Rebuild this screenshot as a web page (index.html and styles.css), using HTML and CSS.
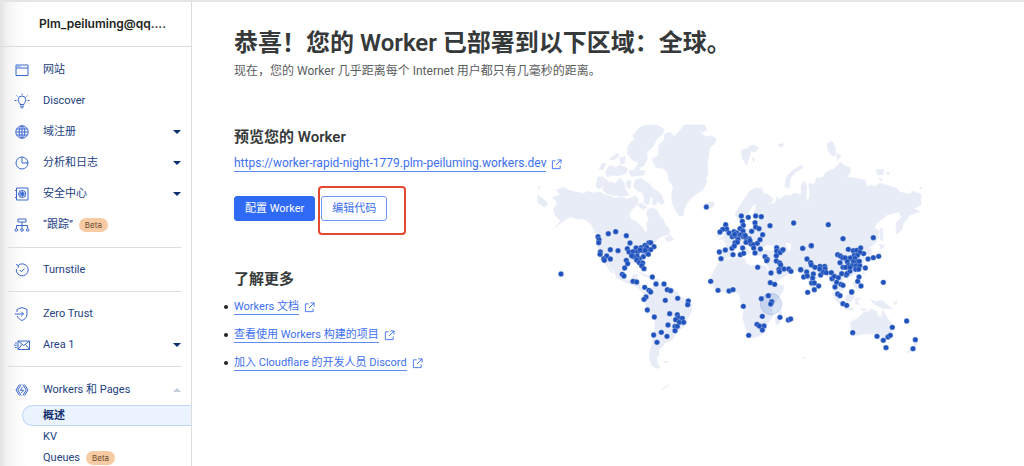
FILE: index.html
```html
<!DOCTYPE html>
<html lang="zh-CN">
<head>
<meta charset="utf-8">
<meta name="viewport" content="width=device-width, initial-scale=1">
<title>Workers</title>
<link rel="stylesheet" href="styles.css">
</head>
<body>
<svg width="0" height="0" class="defs" aria-hidden="true">
  <symbol id="external" viewBox="0 0 12 12"><path d="M5 2H1.5v8.5H10V7M7 1h4v4M11 1 5.5 6.500"/></symbol>
</svg>
<div class="app">
  <aside class="sidebar">
    <div class="account">Plm_peiluming@qq....</div>
    <nav class="nav">
      <div class="group">
        <a class="item" href="#"><svg class="icon" viewBox="0 0 16 16"><path d="M2 3h12v10.500H2zM2 6h12M3.500 4.500h1M5.500 4.500h1"/></svg>网站</a>
        <a class="item" href="#"><svg class="icon" viewBox="0 0 16 16"><path d="M6 11.500C6 9.500 4.200 9 4.200 6.800a3.800 3.800 0 0 1 7.600 0c0 2.200-1.800 2.700-1.800 4.700zM6 13.200h4M6.700 14.800h2.600M8 .5v1.300M.5 7.500h2M13.500 7.500h2M2.500 2.500l1 1M13.500 2.500l-1 1"/></svg>Discover</a>
        <a class="item" href="#"><svg class="icon" viewBox="0 0 16 16"><circle cx="8" cy="8" r="6.200"/><ellipse cx="8" cy="8" rx="2.800" ry="6.200"/><path d="M2.500 5h11M2 8h12M2.500 11h11M8 2v12"/></svg>域注册<span class="caret"></span></a>
        <a class="item" href="#"><svg class="icon" viewBox="0 0 16 16"><circle cx="8" cy="8" r="6"/><path d="M8 2v6h6"/></svg>分析和日志<span class="caret"></span></a>
        <a class="item" href="#"><svg class="icon" viewBox="0 0 16 16"><path d="M2.500 2h11.500v12H2.500zM1 4.500h1.500M1 11.500h1.500"/><circle cx="8.200" cy="8" r="3.600"/><circle cx="8.200" cy="8" r="1.300"/><path d="M8.200 4.400v7.200M4.600 8h7.200M5.700 5.500l5 5M10.700 5.500l-5 5"/></svg>安全中心<span class="caret"></span></a>
        <a class="item" href="#"><svg class="icon" viewBox="0 0 16 16"><path d="M4 2h8v3H4zM8 5v6.500M2.500 11.500v-3h11v3"/><circle cx="2.300" cy="13" r="1.300"/><circle cx="8" cy="13" r="1.300"/><circle cx="13.700" cy="13" r="1.300"/></svg>“跟踪”<span class="badge">Beta</span></a>
      </div>
      <div class="group">
        <a class="item" href="#"><svg class="icon" viewBox="0 0 16 16"><path d="M4 3.600A6 6 0 1 1 2.300 7M2 2.500l2.300 1v2.400M5.700 8l1.700 1.800 3.200-3.300"/></svg>Turnstile</a>
      </div>
      <div class="group">
        <a class="item" href="#"><svg class="icon" viewBox="0 0 16 16"><path d="M3 6V3.500L8 1.500l5 2V8c0 3.500-2.500 5.500-5 6.500-2-.8-4-2.300-4.700-4.500M.8 8h8.700M7.200 5.700 9.500 8l-2.300 2.300"/></svg>Zero Trust</a>
        <a class="item" href="#"><svg class="icon" viewBox="0 0 16 16"><path d="M4 4h11.500v8.500H4zM4 4l5.700 4.500L15.500 4M4 12.500l4-5M15.500 12.500l-4-5M1 6h1.800M0 8.200h2.800M1 10.500h1.800"/></svg>Area 1<span class="caret"></span></a>
      </div>
      <div class="group">
        <a class="item" href="#"><svg class="icon" viewBox="0 0 16 16"><path d="M5.500 2.500 2 8l3.500 5.500M10.500 2.500 14 8l-3.500 5.500M7.200 2.500 3.800 8l3.400 5.500M8.800 2.500 12.200 8l-3.400 5.500M8.700 5 6.200 8.300h3.500L7.300 11"/></svg>Workers 和 Pages<span class="caret up"></span></a>
        <a class="sub active" href="#">概述</a>
        <a class="sub" href="#">KV</a>
        <a class="sub" href="#">Queues<span class="badge">Beta</span></a>
      </div>
    </nav>
  </aside>
  <main class="main">
    <header>
      <h1>恭喜！您的 Worker 已部署到以下区域：全球。</h1>
      <p class="lead">现在，您的 Worker 几乎距离每个 Internet 用户都只有几毫秒的距离。</p>
    </header>
    <div class="columns">
      <div class="content">
        <section>
          <h2>预览您的 Worker</h2>
          <a class="link url" href="#"><span>https://worker-rapid-night-1779.plm-peiluming.workers.dev</span><svg class="ext"><use href="#external"/></svg></a>
          <div class="actions">
            <button class="btn primary" type="button">配置 Worker</button>
            <div class="highlight"><button class="btn" type="button">编辑代码</button></div>
          </div>
        </section>
        <section class="more">
          <h2>了解更多</h2>
          <ul>
            <li><a class="link" href="#"><span>Workers 文档</span><svg class="ext"><use href="#external"/></svg></a></li>
            <li><a class="link" href="#"><span>查看使用 Workers 构建的项目</span><svg class="ext"><use href="#external"/></svg></a></li>
            <li><a class="link" href="#"><span>加入 Cloudflare 的开发人员 Discord</span><svg class="ext"><use href="#external"/></svg></a></li>
          </ul>
        </section>
      </div>
      <svg class="map" viewBox="0 0 1200 840" role="img" aria-label="World map">
        <defs>
          <marker id="dot" viewBox="-10 -10 20 20" markerWidth="20" markerHeight="20" markerUnits="userSpaceOnUse"><circle class="pin" r="8"/></marker>
        </defs>
        <g class="land">
          <path d="M80 225 100 217 112 224 130 229 160 236 175 229 190 234 210 231 225 240 240 243 255 250 275 246 290 252 306 248 318 243 326 254 320 270 303 286 297 300 302 312 320 320 336 336 345 352 353 348 350 328 357 312 350 298 353 284 368 278 383 288 388 304 399 312 406 328 420 345 417 358 396 364 382 372 372 386 360 410 345 428 335 440 343 460 336 463 325 445 300 442 285 455 280 480 290 498 303 494 310 480 322 478 318 498 326 505 332 520 345 530 362 538 356 545 340 534 320 515 290 503 262 490 252 470 236 446 230 444 250 472 246 474 222 440 209 420 203 395 204 368 194 348 182 326 162 312 140 312 122 305 100 318 75 337 92 318 75 300 70 284 82 262 68 247 90 240Z"/>
          <path d="M358 530 372 512 385 505 405 510 430 520 445 534 452 545 474 558 487 568 484 590 473 610 467 630 448 646 436 660 425 676 405 683 398 695 385 706 388 718 380 726 382 745 390 758 378 760 365 750 358 730 360 708 366 690 370 660 375 635 374 612 360 595 348 572 342 556 350 540Z"/>
          <path d="M450 48 462 30 524 30 531 44 510 55 530 66 545 62 559 72 552 88 540 96 536 120 532 150 534 180 528 190 530 202 518 225 494 240 472 262 462 284 460 302 450 303 438 288 427 264 425 238 430 215 418 198 412 172 400 160 378 158 366 132 385 122 386 92 404 72 404 58 420 52 432 64Z"/>
          <path d="M308 62 328 38 345 31 382 31 402 42 398 58 380 72 368 96 350 112 352 132 340 154 327 157 322 140 308 136 292 116 294 94 306 78 316 76Z"/>
          <path d="M207 162 216 146 228 144 220 164ZM238 132 252 122 262 114 268 122 252 134ZM226 172 238 152 258 158 270 150 292 160 290 174 266 182 246 180 232 186ZM198 214 204 186 218 186 236 200 224 212 206 222ZM218 224 228 206 246 200 256 206 270 190 282 202 286 222 296 240 272 244 248 240 230 236ZM296 168 312 166 322 150 332 168 346 168 340 180 304 184ZM310 214 318 194 334 190 346 200 360 208 368 222 380 226 394 240 403 264 392 268 382 256 378 270 366 268 370 250 352 240 346 254 336 232 322 226ZM268 130 286 124 284 144 272 146ZM290 196 304 198 300 222 290 214ZM322 268 334 264 350 276 338 284ZM345 236 362 242 356 270 342 264ZM405 370 420 360 431 374 412 380ZM23 240 40 252 54 266 44 276 24 264ZM528 264 550 260 554 272 536 282ZM325 470 350 480 366 489 345 484ZM370 492 388 494 386 500 370 498ZM400 740 414 739 410 744ZM393 824 416 810 412 815ZM24 215 32 217 28 221Z"/>
          <g transform="translate(570 0)">
            <path fill-rule="evenodd" d="M45 300 58 274 74 252 88 230 104 220 124 220 130 234 150 242 160 254 152 264 142 258 148 268 166 264 170 246 178 254 196 240 210 244 222 234 244 240 243 212 254 198 260 214 258 246 264 262 270 240 266 206 284 208 288 190 306 188 320 170 342 162 360 142 374 152 390 158 392 172 380 186 408 190 436 196 440 216 454 210 462 216 480 204 506 212 530 220 540 232 575 238 575 228 603 238 603 270 582 280 600 290 570 300 550 325 545 345 530 357 528 325 545 305 535 290 500 300 490 310 470 325 462 340 478 347 474 372 462 388 448 396 456 414 446 424 432 402 426 412 434 430 427 454 415 472 392 484 372 488 365 500 376 514 370 526 356 526 350 518 362 540 356 545 342 530 334 500 325 485 312 470 300 480 285 500 286 522 276 524 260 490 250 485 240 470 215 462 206 475 190 487 165 502 156 490 146 460 136 438 130 422 106 420 100 404 86 393 74 384 68 388 90 412 84 416 64 396 46 394 30 426 10 432-5 430-8 404 20 400 20 386 10 378 30 370 50 355 58 345 60 325 70 330 75 345 96 338 108 315 122 310 98 302 105 285 110 265 95 275 80 300 76 320 66 318 54 310ZM120 402 142 388 160 392 178 404 150 408ZM196 380 214 386 212 412 202 402Z"/>
            <path d="M5 437 25 433 60 428 75 432 75 444 95 454 115 448 138 454 150 488 162 510 192 511 188 530 170 556 155 576 158 604 142 628 136 648 120 662 98 669 85 665 78 640 68 610 72 582 62 562 60 540 46 530 22 529 0 532-15 520-28 500-24 480-14 460-4 445Z"/>
            <path d="M-3 372 12 366 10 342 16 326 26 332 24 350 34 362 24 374ZM-8 348 4 346 4 362-8 364ZM166 612 182 586 186 602 176 630 168 626ZM391 622 418 607 430 592 446 590 452 582 468 588 476 604 486 606 488 584 498 604 514 624 520 642 510 664 492 678 472 672 460 656 432 656 398 664 394 646ZM488 692 502 692 496 706ZM580 668 595 680 586 694 575 708 560 714 574 698 584 690ZM194 214 200 184 220 164 246 150 248 158 226 172 210 192 208 220ZM64 106 88 98 92 112 80 150 66 128ZM84 96 100 90 116 98 106 112 92 108ZM96 130 104 130 102 142ZM174 88 192 86 182 98ZM322 86 336 78 346 98 346 122 336 122 324 108ZM350 114 364 122 352 136ZM468 164 490 164 490 178 472 180ZM496 172 510 174 504 180ZM478 190 488 194 480 198ZM600 216h4v5h-4ZM482 340 488 342 488 378 482 374ZM478 388 494 392 484 404ZM480 408 484 422 468 430 448 434 450 428 470 422ZM335 532 350 540 368 562 374 576 364 574 348 556ZM378 544 398 530 402 546 392 562 378 558ZM374 578 398 580 400 585 376 583ZM406 552 424 548 410 556 418 570 406 566ZM400 500 408 506 418 528 402 514ZM420 580 440 583 432 587ZM450 554 468 560 486 556 510 576 518 582 490 580 466 570ZM520 564 532 558 528 568ZM278 524 286 530 280 534ZM248 726 254 728 250 732ZM430 468 434 474 430 480Z"/>
          </g>
        </g>
        <circle class="halo" cx="723" cy="567" r="32"/>
        <g class="pins">
          <polyline points="204,365 207,374 206,383 235,356 257,350 289,362 300,384 211,411 210,418 241,404 264,407 292,401 297,411 309,410 318,399 323,410 333,398 345,391 338,407 350,411 357,383 362,383 372,395 362,404 355,418 340,425 328,432 321,423 311,425 320,435 328,443 338,444 335,452 342,461 289,436 293,446 284,459 230,423 221,431 223,436 241,432 277,478 282,483 309,499 320,501 367,486 378,507 402,507 344,517 357,526 362,531 412,524 422,527 348,546 342,553 406,556 443,550 475,558 473,569 352,585 373,606 419,596 442,599 445,608 457,610 437,614 448,622 461,622 435,634 442,634 435,647 414,630 394,652 371,660 411,664 381,682 93,477 529,276 350,397 330,405 345,406 305,422"/>
          <g transform="translate(540 270)">
            <polyline points="94,33 115,37 137,33 154,35 97,49 100,61 135,53 137,66 147,71 125,79 158,89 180,62 251,54 47,59 50,72 38,73 30,81 57,84 72,80 67,95 80,84 76,93 90,71 99,78 91,90 100,95 84,103 75,113 82,112 103,90 109,100 118,102 114,111 123,117 66,130 73,123 46,135 28,141 33,161 69,149 91,149 101,145 98,129 130,119 131,129 135,144 151,132 142,115 150,104 200,128 200,138 215,137 210,143 199,152 165,155 172,163 170,167 143,187 199,168 209,174 212,180 207,193 208,200 222,192 236,192 243,199 183,204 181,233 194,238 278,130 304,122 272,194 24,256 57,258 69,254 2,229 108,112 120,107 106,92 74,88 219,134"/>
          </g>
          <g transform="translate(570 390)">
            <polyline points="145,152 124,161 155,170 152,177 70,184 127,214 111,238 118,243 132,243 127,255 86,271 180,217 205,225 212,222 398,263 471,274 490,286 504,276 511,271 517,247 560,228 586,284 579,311 498,308 490,112 369,176 380,181 353,147 360,152 395,141"/>
          </g>
          <g transform="translate(810 330)">
            <polyline points="129,41 220,38 85,-1 8,70 34,62 21,102 32,113 34,120 45,127 60,124 59,132 74,124 75,131 2,134 20,141 11,156 22,153 40,147 38,159 35,174 43,174 56,183 43,194 23,202 62,150 70,141 79,143 94,143 96,161 103,154 115,158 110,172 105,186 123,178 129,181 125,146 139,150 142,145 150,138 120,113 113,89 121,93 128,98 136,99 145,73 160,77 170,76 182,69 191,86 180,82 151,99 163,91 172,91 165,100 142,110 146,121 129,127 160,110 172,110 156,122 169,122 179,122 178,109 167,133 176,133 196,129 177,156 173,169 183,183 204,102 220,98 236,94 155,201 137,127 150,127"/>
          </g>
        </g>
      </svg>
    </div>
  </main>
</div>
</body>
</html>
```
FILE: styles.css
```css
* {
  box-sizing: border-box;
}

body {
  margin: 0;
  background: #fff;
  color: #36393a;
  font-family: Roboto, "Noto Sans CJK SC", sans-serif;
  font-size: 11px;
  line-height: 16px;
}

h1, h2, p, ul {
  margin: 0;
}

.defs {
  position: absolute;
}

.app {
  display: flex;
  height: 100vh;
  border-top: 2px solid #e5e5e5;
}

.sidebar {
  flex: none;
  width: 192px;
  overflow: hidden;
  border-right: 1px solid #dedede;
  background: linear-gradient(to right, #e2e2e2, #f4f4f4 8px, #fdfdfd 20px, #fff 32px);
}

.account {
  height: 45px;
  padding: 14px 24px 0 39px;
  border-bottom: 1px solid #dcdcdc;
  color: #1d1f20;
  font-family: Inter, sans-serif;
  font-size: 12px;
  font-weight: 600;
}

.group {
  margin: 0 10px 0 8px;
  padding: 6px 0;
  border-bottom: 1px solid #dedede;
}

.group:first-child {
  padding: 7px 0;
}

.group:last-child {
  margin-right: 0;
  padding-top: 7px;
  border-bottom: 0;
}

.item {
  display: flex;
  align-items: center;
  height: 31px;
  padding-left: 6px;
  color: #23417f;
  text-decoration: none;
}

.icon {
  flex: none;
  width: 16px;
  height: 16px;
  margin-right: 13px;
  fill: none;
  stroke: #3a68cf;
  stroke-width: 1;
}

.caret {
  margin-left: auto;
  border: 4px solid transparent;
  border-top-color: #0b2e72;
  border-bottom: 0;
}

.caret.up {
  margin-right: 10px;
  border-top: 0;
  border-bottom: 4px solid #c4cbdb;
}

.badge {
  margin-left: 6px;
  padding: 0 6px;
  border-radius: 7px;
  background: #f6cba4;
  color: #6a4a2c;
  font-family: Inter, sans-serif;
  font-size: 8px;
  font-weight: 400;
  line-height: 14px;
}

.sub {
  display: flex;
  align-items: center;
  height: 21px;
  margin-left: 14px;
  padding-left: 21px;
  color: #23417f;
  text-decoration: none;
}

.sub.active {
  border: 1px solid #bfd6f8;
  border-right: 0;
  border-radius: 11px 0 0 11px;
  background: #ebf3fe;
  padding-left: 20px;
  color: #102f6e;
  font-weight: 700;
}

.main {
  flex: 1;
  min-width: 0;
  padding: 25px 94px 0 42px;
}

h1 {
  font-size: 24px;
  font-weight: 600;
  line-height: 32px;
  white-space: nowrap;
}

.lead {
  margin-top: 4px;
  color: #595c5e;
  font-size: 12px;
  white-space: nowrap;
}

.columns {
  display: grid;
  grid-template-columns: minmax(0, 296fr) minmax(0, 400fr);
  align-items: start;
  margin-top: 36px;
}

.content {
  padding-top: 11px;
}

h2 {
  font-size: 15px;
  font-weight: 600;
  line-height: 22px;
  white-space: nowrap;
}

.link {
  display: inline-flex;
  align-items: center;
  gap: 5px;
  color: #3d70f0;
  text-decoration: none;
  white-space: nowrap;
}

.link span {
  border-bottom: 1px solid #5f89f3;
  line-height: 15px;
}

.url {
  margin-top: 8px;
  font-size: 12px;
}

.ext {
  width: 11px;
  height: 11px;
  fill: none;
  stroke: #3d70f0;
  stroke-width: 1;
}

.actions {
  display: flex;
  align-items: flex-start;
  gap: 3px;
  margin-top: 14px;
}

.btn {
  height: 25px;
  padding: 0 10px;
  border: 1px solid #6e97f5;
  border-radius: 3px;
  background: #fff;
  color: #3d70f0;
  font: inherit;
  line-height: 16px;
  white-space: nowrap;
}

.primary {
  margin-top: 10px;
  border-color: #2f6af5;
  background: #2f6af5;
  color: #fff;
}

.highlight {
  width: 88px;
  height: 49px;
  padding: 8px 0 0 1px;
  border: 2px solid #e2472f;
  border-radius: 4px;
}

.more {
  margin-top: 33px;
}

ul {
  display: grid;
  gap: 12px;
  margin-top: 9px;
  padding: 0;
  list-style: none;
}

li {
  display: flex;
  align-items: center;
  height: 16px;
}

li::before {
  width: 4px;
  height: 4px;
  margin: 0 6px 0 -10px;
  border-radius: 50%;
  background: #222;
  content: "";
}

.map {
  display: block;
  width: 100%;
}

.land {
  fill: #e8ecf7;
  stroke: #e8ecf7;
  stroke-width: 2;
  stroke-linejoin: round;
}

.halo {
  fill: #2055c0;
  fill-opacity: 0.16;
  stroke: #2055c0;
  stroke-opacity: 0.25;
  stroke-width: 2;
}

.pin {
  fill: #1f52bd;
  stroke: #c3d0ee;
  stroke-width: 1;
}

.pins polyline {
  fill: none;
  stroke: none;
  marker: url(#dot);
}
```
